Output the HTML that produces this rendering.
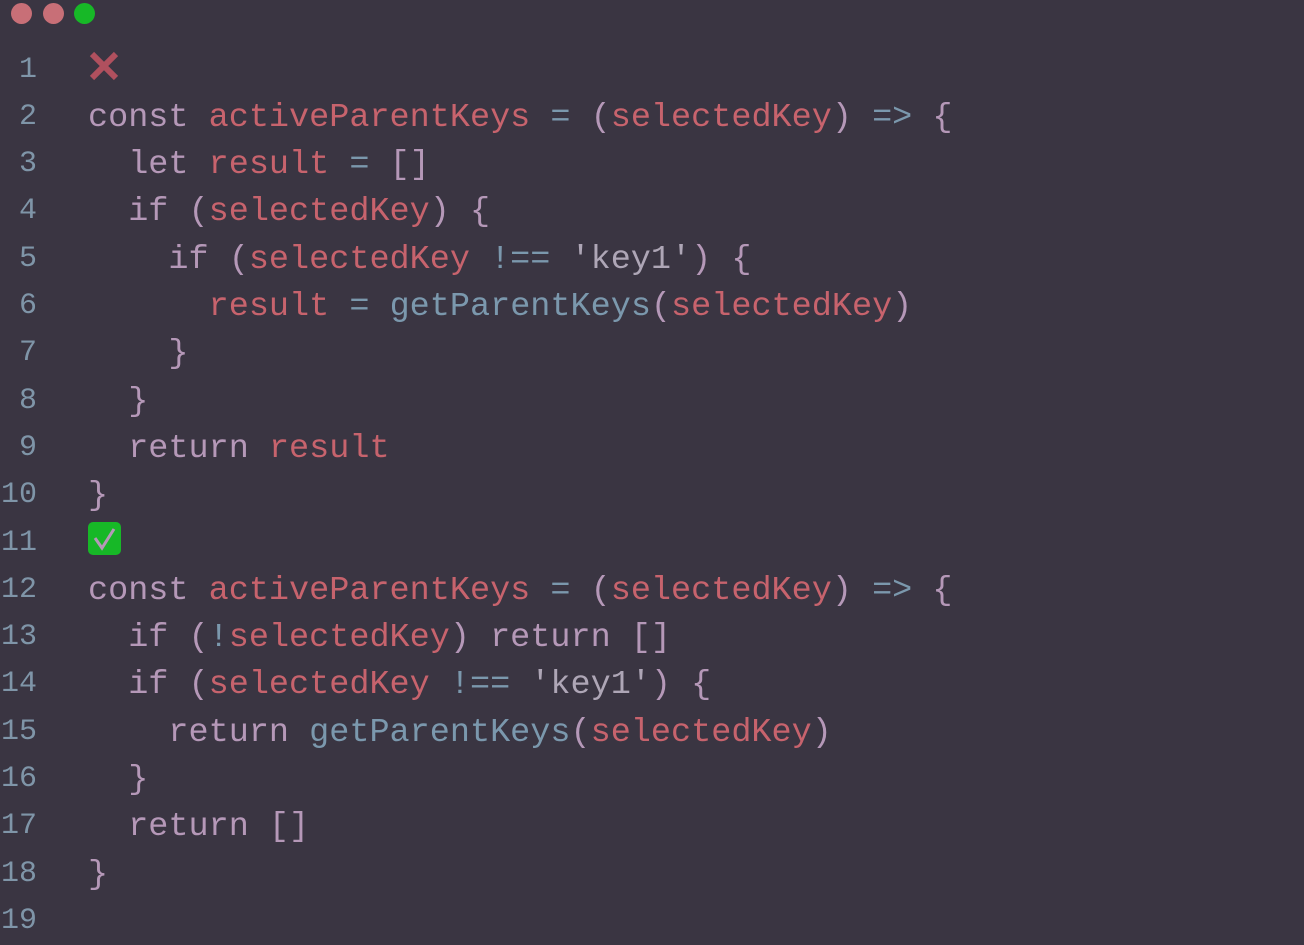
<!DOCTYPE html>
<html><head><meta charset="utf-8"><style>
html,body{margin:0;padding:0;background:#3a3542;width:1304px;height:934px;overflow:hidden}
.dot{position:absolute;top:3px;width:21px;height:21px;border-radius:50%}
.ln{position:absolute;left:0;width:37px;text-align:right;font:30px "Liberation Mono",monospace;color:#7f95a8;line-height:47px}
.c{position:absolute;left:88px;font:33.5px "Liberation Mono",monospace;line-height:47px;white-space:pre;color:#b598b8}
.r{color:#c7636d}.b{color:#7b98ad}.s{color:#aea6b6}
</style></head><body>
<div class="dot" style="left:11px;background:#c86f77"></div>
<div class="dot" style="left:43px;background:#c86f77"></div>
<div class="dot" style="left:74px;background:#17b827"></div>
<svg style="position:absolute;left:88px;top:50px" width="33" height="32"><path d="M4 4 L28 28 M28 4 L4 28" stroke="#b0505e" stroke-width="6"/></svg>
<div style="position:absolute;left:88px;top:522px;width:33px;height:33px;background:#17b827;border-radius:5px"></div>
<svg style="position:absolute;left:88px;top:522px" width="33" height="33"><path d="M7 16 L14 26 L26 7" stroke="#b598b8" stroke-width="3" fill="none"/></svg>
<div id="L"></div>
<script>
var lines=[
'',
'const <span class="r">activeParentKeys</span> <span class="b">=</span> (<span class="r">selectedKey</span>) <span class="b">=&gt;</span> {',
'  let <span class="r">result</span> <span class="b">=</span> []',
'  if (<span class="r">selectedKey</span>) {',
'    if (<span class="r">selectedKey</span> <span class="b">!==</span> <span class="s">\'key1\'</span>) {',
'      <span class="r">result</span> <span class="b">=</span> <span class="b">getParentKeys</span>(<span class="r">selectedKey</span>)',
'    }',
'  }',
'  return <span class="r">result</span>',
'}',
'',
'const <span class="r">activeParentKeys</span> <span class="b">=</span> (<span class="r">selectedKey</span>) <span class="b">=&gt;</span> {',
'  if (<span class="b">!</span><span class="r">selectedKey</span>) return []',
'  if (<span class="r">selectedKey</span> <span class="b">!==</span> <span class="s">\'key1\'</span>) {',
'    return <span class="b">getParentKeys</span>(<span class="r">selectedKey</span>)',
'  }',
'  return []',
'}',
''];
var h='';
for(var i=0;i<19;i++){var y=68+i*47.3-23.5;
h+='<div class="ln" style="top:'+(y+2)+'px">'+(i+1)+'</div><div class="c" style="top:'+(y+3)+'px">'+lines[i]+'</div>';}
document.getElementById('L').innerHTML=h;
</script>
</body></html>
